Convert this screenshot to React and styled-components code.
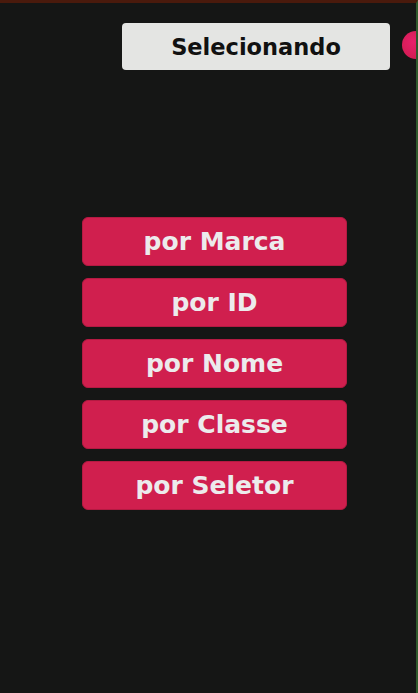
import React from "react";
import styled, { createGlobalStyle } from "styled-components";

const GlobalStyle = createGlobalStyle`
  html, body {
    margin: 0;
    padding: 0;
    background: #151615;
  }
  body {
    font-family: "DejaVu Sans", "Liberation Sans", sans-serif;
  }
`;

const StyledScreen = styled.div`
  position: relative;
  width: 418px;
  height: 693px;
  overflow: hidden;
  background: #151615;
  border-top: 3px solid #4a1a0c;
  box-sizing: border-box;
  border-right: 2px solid #2f5a2c;
`;
const StyledTopGlow = styled.div`
  position: absolute;
  top: -3px;
  left: 0;
  right: 0;
  height: 3px;
  background: linear-gradient(
    90deg,
    #3a1a0a 0%,
    #8a3a0a 40%,
    #5a1e0a 70%,
    #7a1d12 100%
  );
`;
const StyledHeader = styled.div`
  display: flex;
  justify-content: flex-end;
  padding: 20px 26px 0 0;
`;
const StyledTitle = styled.div`
  width: 268px;
  height: 47px;
  display: flex;
  align-items: center;
  justify-content: center;
  background: #e4e5e3;
  border-radius: 4px;
  font-weight: 700;
  font-size: 22.5px;
  color: #111;
`;
const StyledDot = styled.div`
  position: absolute;
  top: 28px;
  right: -14px;
  width: 28px;
  height: 28px;
  border-radius: 50%;
  background: radial-gradient(circle at 40% 40%, #e8206a, #c81a48);
`;
const StyledMenu = styled.div`
  display: flex;
  flex-direction: column;
  gap: 12px;
  padding: 147px 0 0 82px;
`;
const StyledOption = styled.button`
  width: 265px;
  height: 49px;
  border: 1px solid #b41a42;
  border-radius: 6px;
  background: #d01f4e;
  color: #ecebec;
  font-family: "DejaVu Sans", "Liberation Sans", sans-serif;
  font-weight: 700;
  font-size: 25px;
  padding: 0;
  cursor: pointer;
`;

const options = ["por Marca", "por ID", "por Nome", "por Classe", "por Seletor"];

const App = () => (
  <>
    <GlobalStyle />
    <StyledScreen>
      <StyledTopGlow />
      <StyledHeader>
        <StyledTitle>Selecionando</StyledTitle>
      </StyledHeader>
      <StyledDot />
      <StyledMenu>
        {options.map((label) => (
          <StyledOption key={label}>{label}</StyledOption>
        ))}
      </StyledMenu>
    </StyledScreen>
  </>
);

export default App;
